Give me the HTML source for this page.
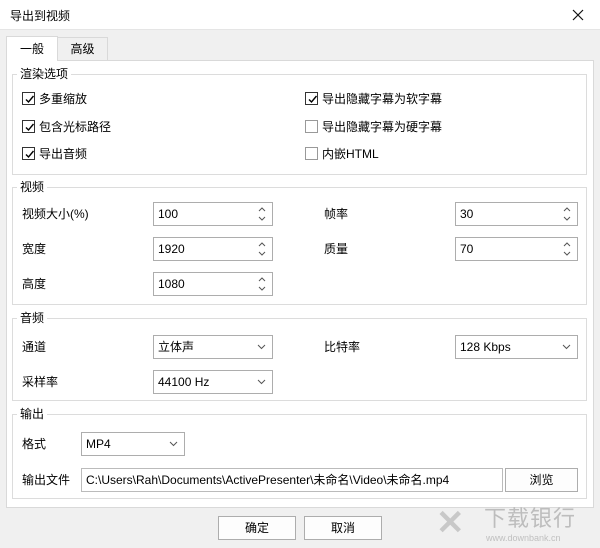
<!DOCTYPE html><html><head><meta charset="utf-8"><style>
*{box-sizing:border-box;margin:0;padding:0}
body{width:600px;height:548px;background:#f0f0f0;font-family:"Liberation Sans","Noto Sans CJK SC",sans-serif;font-size:12px;color:#000;position:relative;overflow:hidden}
.a{position:absolute;line-height:16px}
.title{left:0;top:0;width:600px;height:30px;background:#fff;border-bottom:1px solid #e5e5e5}
.panel{left:6px;top:60px;width:588px;height:448px;background:#fff;border:1px solid #d9d9d9}
.grp{border:1px solid #dcdcdc}
.leg{background:#fff;padding:0 3px;font-size:12px;line-height:14px}
.cb{width:13px;height:13px;border:1px solid #333;background:#fff}
.cb svg{position:absolute;left:1px;top:1px}
.in{border:1px solid #adadad;background:#fff;height:24px;line-height:22px;padding-left:4px}
.in svg{position:absolute;right:6px}
.btn{border:1px solid #adadad;background:#fdfdfd;height:24px;line-height:22px;text-align:center}
</style></head><body>
<div class="a title"></div>
<div class="a" style="left:10px;top:8px;font-size:12px">导出到视频</div>
<svg class="a" style="left:572px;top:9px" width="12" height="12"><path d="M1 1L11 11M11 1L1 11" stroke="#111" stroke-width="1.2"/></svg>
<div class="a panel"></div>
<div class="a" style="left:6px;top:36px;width:52px;height:25px;background:#fff;border:1px solid #d9d9d9;border-bottom:none;text-align:center;line-height:24px">一般</div>
<div class="a" style="left:57px;top:37px;width:51px;height:24px;background:#f0f0f0;border:1px solid #d9d9d9;text-align:center;line-height:22px">高级</div>

<div class="a grp" style="left:12px;top:74px;width:575px;height:101px"></div>
<div class="a leg" style="left:17px;top:67px">渲染选项</div>
<div class="a grp" style="left:12px;top:187px;width:575px;height:118px"></div>
<div class="a leg" style="left:17px;top:180px">视频</div>
<div class="a grp" style="left:12px;top:318px;width:575px;height:83px"></div>
<div class="a leg" style="left:17px;top:311px">音频</div>
<div class="a grp" style="left:12px;top:414px;width:575px;height:85px"></div>
<div class="a leg" style="left:17px;top:407px">输出</div>

<div class="a cb" style="left:22px;top:92px"><svg width="11" height="11"><path d="M2 5.5l2.5 2.5 5-6" stroke="#000" stroke-width="1.4" fill="none"/></svg></div>
<div class="a" style="left:39px;top:91px">多重缩放</div>
<div class="a cb" style="left:22px;top:120px"><svg width="11" height="11"><path d="M2 5.5l2.5 2.5 5-6" stroke="#000" stroke-width="1.4" fill="none"/></svg></div>
<div class="a" style="left:39px;top:119px">包含光标路径</div>
<div class="a cb" style="left:22px;top:147px"><svg width="11" height="11"><path d="M2 5.5l2.5 2.5 5-6" stroke="#000" stroke-width="1.4" fill="none"/></svg></div>
<div class="a" style="left:39px;top:146px">导出音频</div>
<div class="a cb" style="left:305px;top:92px"><svg width="11" height="11"><path d="M2 5.5l2.5 2.5 5-6" stroke="#000" stroke-width="1.4" fill="none"/></svg></div>
<div class="a" style="left:322px;top:91px">导出隐藏字幕为软字幕</div>
<div class="a cb" style="left:305px;top:120px;border-color:#999"></div>
<div class="a" style="left:322px;top:119px">导出隐藏字幕为硬字幕</div>
<div class="a cb" style="left:305px;top:147px;border-color:#999"></div>
<div class="a" style="left:322px;top:146px">内嵌HTML</div>

<div class="a" style="left:22px;top:206px">视频大小(%)</div>
<div class="a in" style="left:153px;top:202px;width:120px">100<svg style="top:4px" width="8" height="14"><path d="M1 4l3-3 3 3M1 10l3 3 3-3" stroke="#555" fill="none"/></svg></div>
<div class="a" style="left:22px;top:241px">宽度</div>
<div class="a in" style="left:153px;top:237px;width:120px">1920<svg style="top:4px" width="8" height="14"><path d="M1 4l3-3 3 3M1 10l3 3 3-3" stroke="#555" fill="none"/></svg></div>
<div class="a" style="left:22px;top:276px">高度</div>
<div class="a in" style="left:153px;top:272px;width:120px">1080<svg style="top:4px" width="8" height="14"><path d="M1 4l3-3 3 3M1 10l3 3 3-3" stroke="#555" fill="none"/></svg></div>
<div class="a" style="left:324px;top:206px">帧率</div>
<div class="a in" style="left:455px;top:202px;width:123px">30<svg style="top:4px" width="8" height="14"><path d="M1 4l3-3 3 3M1 10l3 3 3-3" stroke="#555" fill="none"/></svg></div>
<div class="a" style="left:324px;top:241px">质量</div>
<div class="a in" style="left:455px;top:237px;width:123px">70<svg style="top:4px" width="8" height="14"><path d="M1 4l3-3 3 3M1 10l3 3 3-3" stroke="#555" fill="none"/></svg></div>

<div class="a" style="left:22px;top:339px">通道</div>
<div class="a in" style="left:153px;top:335px;width:120px">立体声<svg style="top:8px" width="9" height="6"><path d="M1 1l3.5 3.5L8 1" stroke="#555" fill="none"/></svg></div>
<div class="a" style="left:22px;top:374px">采样率</div>
<div class="a in" style="left:153px;top:370px;width:120px">44100 Hz<svg style="top:8px" width="9" height="6"><path d="M1 1l3.5 3.5L8 1" stroke="#555" fill="none"/></svg></div>
<div class="a" style="left:324px;top:339px">比特率</div>
<div class="a in" style="left:455px;top:335px;width:123px">128 Kbps<svg style="top:8px" width="9" height="6"><path d="M1 1l3.5 3.5L8 1" stroke="#555" fill="none"/></svg></div>

<div class="a" style="left:22px;top:436px">格式</div>
<div class="a in" style="left:81px;top:432px;width:104px">MP4<svg style="top:8px" width="9" height="6"><path d="M1 1l3.5 3.5L8 1" stroke="#555" fill="none"/></svg></div>
<div class="a" style="left:22px;top:472px">输出文件</div>
<div class="a in" style="left:81px;top:468px;width:422px;border-color:#bbb">C:\Users\Rah\Documents\ActivePresenter\未命名\Video\未命名.mp4</div>
<div class="a btn" style="left:505px;top:468px;width:73px">浏览</div>

<div class="a btn" style="left:218px;top:516px;width:78px">确定</div>
<div class="a btn" style="left:304px;top:516px;width:78px">取消</div>

<div class="a" style="left:436px;top:503px;font-size:34px;line-height:40px;color:#c8c8c8;font-weight:bold">✕</div>
<div class="a" style="left:484px;top:506px;font-size:22px;line-height:26px;color:#bdbdbd;letter-spacing:1px">下载银行</div>
<div class="a" style="left:486px;top:533px;font-size:9px;line-height:10px;color:#c0c0c0">www.downbank.cn</div>
</body></html>
